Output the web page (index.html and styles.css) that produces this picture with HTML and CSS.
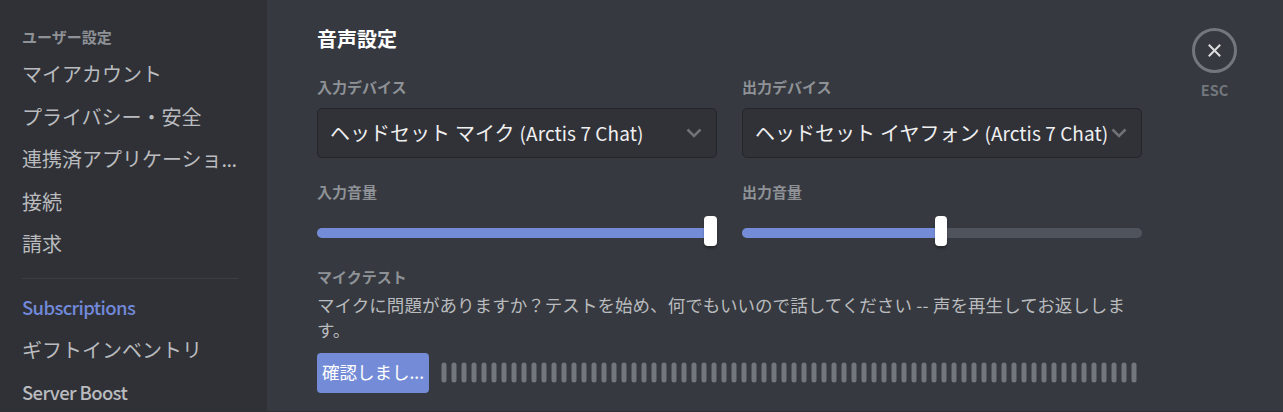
FILE: index.html
```
<!DOCTYPE html>
<html lang="ja">
<head>
<meta charset="utf-8">
<title>音声設定</title>
<link rel="stylesheet" href="styles.css">
</head>
<body>
<div class="app">
  <nav class="sidebar">
    <h2 class="sidebar-title">ユーザー設定</h2>
    <a class="item">マイアカウント</a>
    <a class="item">プライバシー・安全</a>
    <a class="item">連携済アプリケーショ<span class="dots">...</span></a>
    <a class="item">接続</a>
    <a class="item">請求</a>
    <div class="separator"></div>
    <a class="item accent"><span class="latin">Subscriptions</span></a>
    <a class="item">ギフトインベントリ</a>
    <a class="item"><span class="latin">Server Boost</span></a>
  </nav>
  <main class="content">
    <h1 class="title">音声設定</h1>
    <div class="columns">
      <section class="column">
        <h3 class="label">入力デバイス</h3>
        <div class="select">
          <div class="value">ヘッドセット<span class="space"></span>マイク<span class="space"></span><span class="latin device">(Arctis 7 Chat)</span></div>
          <svg class="chevron" viewBox="0 0 16 10"><path d="M1.5 1.5 8 8l6.500-6.500"/></svg>
        </div>
        <h3 class="label volume">入力音量</h3>
        <div class="slider full"><div class="fill"></div><div class="thumb"></div></div>
      </section>
      <section class="column">
        <h3 class="label">出力デバイス</h3>
        <div class="select">
          <div class="value">ヘッドセット<span class="space"></span>イヤフォン<span class="space"></span><span class="latin device">(Arctis 7 Chat)</span></div>
          <svg class="chevron" viewBox="0 0 16 10"><path d="M1.5 1.5 8 8l6.500-6.500"/></svg>
        </div>
        <h3 class="label volume">出力音量</h3>
        <div class="slider half"><div class="fill"></div><div class="thumb"></div></div>
      </section>
    </div>
    <h3 class="label test">マイクテスト</h3>
    <p class="description">マイクに問題がありますか？テストを始め、何でもいいので話してください<span class="dash">--</span>声を再生してお返ししま<br>す。</p>
    <div class="test-row">
      <button class="button">確認しまし<span>...</span></button>
      <svg class="meter" width="700" height="22">
        <defs><pattern id="notch" width="10" height="22" patternUnits="userSpaceOnUse"><rect x="0.5" y="0.5" width="5" height="20" rx="2.500" fill="#72767d"/></pattern></defs>
        <rect width="700" height="22" fill="url(#notch)"/>
      </svg>
    </div>
  </main>
  <aside class="close">
    <div class="ring"><svg viewBox="0 0 13 13"><path d="M.8.8l11.400 11.400M12.200.8.8 12.200"/></svg></div>
    <span class="esc">ESC</span>
  </aside>
</div>
</body>
</html>
```
FILE: styles.css
```
* { box-sizing: border-box; }
body { margin: 0; background: #36393f; font-family: "Noto Sans CJK JP", sans-serif; }
h1, h2, h3, p { margin: 0; }
.app { display: flex; width: 1283px; height: 412px; overflow: hidden; background: #36393f; border-bottom: 1px solid #302f36; }
.sidebar { width: 267px; flex: none; padding: 27px 29px 0 22px; background: #2f3136; }
.sidebar-title { height: 20px; line-height: 20px; font-size: 15px; font-weight: 700; color: #8e9297; margin-bottom: 6px; }
.item { display: block; height: 42.5px; line-height: 42.5px; font-size: 20px; font-weight: 400; color: #b9bbbe; white-space: nowrap; }
.item.accent { color: #7289da; }
.dots { letter-spacing: -.6px; }
.latin { display: inline-block; vertical-align: top; line-height: 40.5px; font-size: 18.5px; font-weight: 500; letter-spacing: -.63px; white-space: nowrap; }
.separator { height: 1px; margin: 12px 0 8px; background: #3c3e44; }
.content { width: 825px; flex: none; margin-left: 50px; padding-top: 26px; }
.title { height: 26px; line-height: 26px; font-size: 20px; font-weight: 700; color: #fff; }
.columns { display: flex; gap: 25px; margin-top: 25px; }
.column { width: 400px; }
.label { height: 20px; line-height: 20px; font-size: 15px; font-weight: 700; color: #8e9297; }
.select { display: flex; align-items: center; width: 400px; height: 50px; margin-top: 11px; padding: 0 14px 0 12px; border: 1px solid #232529; border-radius: 5px; background: #303238; }
.value { flex: 1; height: 48px; line-height: 48px; overflow: hidden; white-space: nowrap; font-size: 20px; color: #f0f0f1; }
.device { line-height: 48px; font-size: 19px; font-weight: 400; letter-spacing: .08px; }
.space { display: inline-block; width: 5px; }
.chevron { width: 16px; height: 10px; flex: none; margin-left: 4px; fill: none; stroke: #6f7277; stroke-width: 2.500; }
.volume { margin-top: 24px; }
.slider { position: relative; height: 10px; margin-top: 26px; border-radius: 5px; background: #4f545c; }
.fill { height: 10px; border-radius: 5px 0 0 5px; background: #748cd7; }
.full .fill { width: 394px; }
.half .fill { width: 200px; }
.thumb { position: absolute; top: -12px; width: 12.500px; height: 30px; border-radius: 4px; background: #fff; box-shadow: 0 3px 2px rgba(0,0,0,.12), 0 2px 2px rgba(0,0,0,.15); }
.full .thumb { left: 387px; }
.half .thumb { left: 193px; width: 12px; }
.test { margin-top: 29px; }
.description { height: 50px; margin-top: 5px; line-height: 25px; font-size: 17.5px; letter-spacing: .05px; color: #b9bbbe; white-space: nowrap; }
.dash { display: inline-block; width: 21px; text-align: center; }
.test-row { display: flex; align-items: center; gap: 12px; margin-top: 11px; }
.button { width: 112px; height: 40px; padding: 0 0 2px; border: 0; border-radius: 4px; background: #748cd7; color: #fff; font: 400 17.5px/38px "Noto Sans CJK JP", sans-serif; white-space: nowrap; }
.meter { display: block; flex: none; }
.close { display: flex; flex-direction: column; align-items: center; width: 45px; margin-left: 50px; padding-top: 28px; }
.ring { display: flex; align-items: center; justify-content: center; width: 45px; height: 45px; padding-bottom: 1px; border: 3px solid #72767d; border-radius: 50%; }
.ring svg { width: 13px; height: 13px; fill: none; stroke: #dcddde; stroke-width: 2; }
.esc { margin-top: 7px; line-height: 20px; font-size: 14.5px; font-weight: 700; color: #72767d; }
```
